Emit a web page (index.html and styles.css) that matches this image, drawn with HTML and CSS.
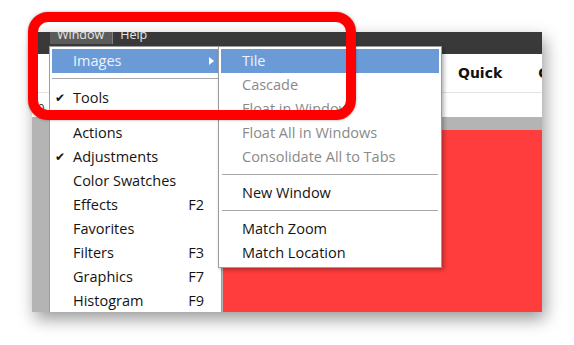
FILE: index.html
```html
<!DOCTYPE html>
<html lang="en">
  <head>
    <meta charset="UTF-8" />
    <title>Window menu</title>
    <link rel="stylesheet" href="styles.css">
  </head>
  <body>
    <div class="stage">
      <div class="window">
        <div class="menubar">
          <span class="menubar-item active">Window</span>
          <span class="menubar-item">Help</span>
        </div>
        <div class="toolbar">
          <span class="tool-title">Quick</span>
          <span class="tool-title">Color</span>
        </div>
        <div class="optionsbar">
          <span class="zoom-value">100</span>
        </div>
        <div class="workspace">
          <div class="canvas"></div>
        </div>

        <!-- Window menu -->
        <ul class="menu main-menu">
          <li class="item highlighted">
            Images
            <span class="arrow"></span>
          </li>
          <li class="separator"></li>
          <li class="item"><span class="check">&#10004;</span>Tools</li>
          <li class="separator small"></li>
          <li class="item">Actions</li>
          <li class="item"><span class="check">&#10004;</span>Adjustments</li>
          <li class="item">Color Swatches</li>
          <li class="item">Effects<span class="shortcut">F2</span></li>
          <li class="item">Favorites</li>
          <li class="item">Filters<span class="shortcut">F3</span></li>
          <li class="item">Graphics<span class="shortcut">F7</span></li>
          <li class="item">Histogram<span class="shortcut">F9</span></li>
        </ul>

        <!-- Images submenu -->
        <ul class="menu sub-menu">
          <li class="item highlighted">Tile</li>
          <li class="item disabled">Cascade</li>
          <li class="item disabled">Float in Window</li>
          <li class="item disabled">Float All in Windows</li>
          <li class="item disabled">Consolidate All to Tabs</li>
          <li class="separator"></li>
          <li class="item">New Window</li>
          <li class="separator"></li>
          <li class="item">Match Zoom</li>
          <li class="item">Match Location</li>
        </ul>
      </div>

      <div class="callout"></div>
    </div>
  </body>
</html>
```

FILE: styles.css
```css
:root {
  --dark: #393939;
  --blue: #6b9bd7;
  --canvas-red: #ff3d3d;
  --ink: #141414;
  --muted: #8a8a8a;
}

body {
  margin: 0;
  background: #ffffff;
  font-family: "Open Sans", "Noto Sans", sans-serif;
  width: 574px;
  height: 345px;
  overflow: hidden;
}

.stage {
  position: relative;
  padding: 32px 0 0 32px;
}

.window {
  position: relative;
  width: 510px;
  height: 280px;
  overflow: hidden;
  background: #b4b4b4;
  display: flex;
  flex-direction: column;
  box-shadow: 3px 7px 16px rgba(0, 0, 0, 0.4);
}

.menubar {
  height: 22px;
  background: var(--dark);
  display: flex;
  align-items: flex-start;
  padding-left: 18px;
  flex-shrink: 0;
}

.menubar-item {
  color: #e6e6e6;
  font-size: 12.5px;
  line-height: 18px;
  height: 12px;
  padding: 0 8px 0 7px;
  overflow: hidden;
  display: flex;
  align-items: flex-end;
}

.menubar-item.active {
  background: #5b5b5b;
  border-right: 1px solid #808080;
}

.toolbar {
  height: 38px;
  background: #ffffff;
  border-bottom: 1px solid #e2e2e2;
  display: flex;
  align-items: center;
  padding-left: 426px;
  gap: 36px;
  flex-shrink: 0;
}

.tool-title {
  font-family: "DejaVu Sans", sans-serif;
  font-weight: bold;
  font-size: 14px;
  color: #111;
  white-space: nowrap;
}

.optionsbar {
  height: 24px;
  background: #ffffff;
  flex-shrink: 0;
  display: flex;
  align-items: flex-end;
}

.zoom-value {
  font-size: 12px;
  color: #333;
  margin-left: -8px;
}

.workspace {
  flex: 1;
  display: flex;
  padding: 13px 0 0 191px;
}

.canvas {
  flex: 1;
  background: var(--canvas-red);
}

/* menus */
.menu {
  position: absolute;
  margin: 0;
  padding: 2px;
  list-style: none;
  background: #ffffff;
  border: 1px solid #9c9c9c;
  font-size: 14.5px;
  color: var(--ink);
}

.main-menu {
  left: 17px;
  top: 14px;
  width: 167px;
  height: 300px;
}

.sub-menu {
  left: 186px;
  top: 14px;
  width: 218px;
  box-shadow: 2px 2px 4px rgba(0, 0, 0, 0.3);
}

.item {
  position: relative;
  height: 24px;
  line-height: 24px;
  white-space: nowrap;
}

.main-menu .item {
  padding-left: 21px;
}

.sub-menu .item {
  padding-left: 21px;
}

.item.highlighted {
  background: var(--blue);
  color: #eef3fb;
}

.item.disabled {
  color: var(--muted);
}

.check {
  position: absolute;
  left: 3px;
  top: 0;
  font-family: "DejaVu Sans", sans-serif;
  font-size: 12px;
}

.shortcut {
  position: absolute;
  right: 15px;
  top: 0;
}

.arrow {
  position: absolute;
  right: 5px;
  top: 8px;
  border-left: 5px solid #ffffff;
  border-top: 4px solid transparent;
  border-bottom: 4px solid transparent;
}

.separator {
  height: 13px;
  position: relative;
}

.separator::after {
  content: "";
  position: absolute;
  left: 0;
  right: 0;
  top: 5px;
  border-top: 1px solid #a8a8a8;
}

.separator.small {
  height: 11px;
}

.sub-menu .separator {
  height: 12px;
}

.sub-menu .separator::after {
  left: 1px;
  right: 1px;
}

/* annotation */
.callout {
  position: absolute;
  left: 28px;
  top: 12px;
  width: 308px;
  height: 88px;
  border: 10px solid #ff0000;
  border-radius: 20px;
  box-shadow: 0 0 3px rgba(0, 0, 0, 0.35);
}
```
